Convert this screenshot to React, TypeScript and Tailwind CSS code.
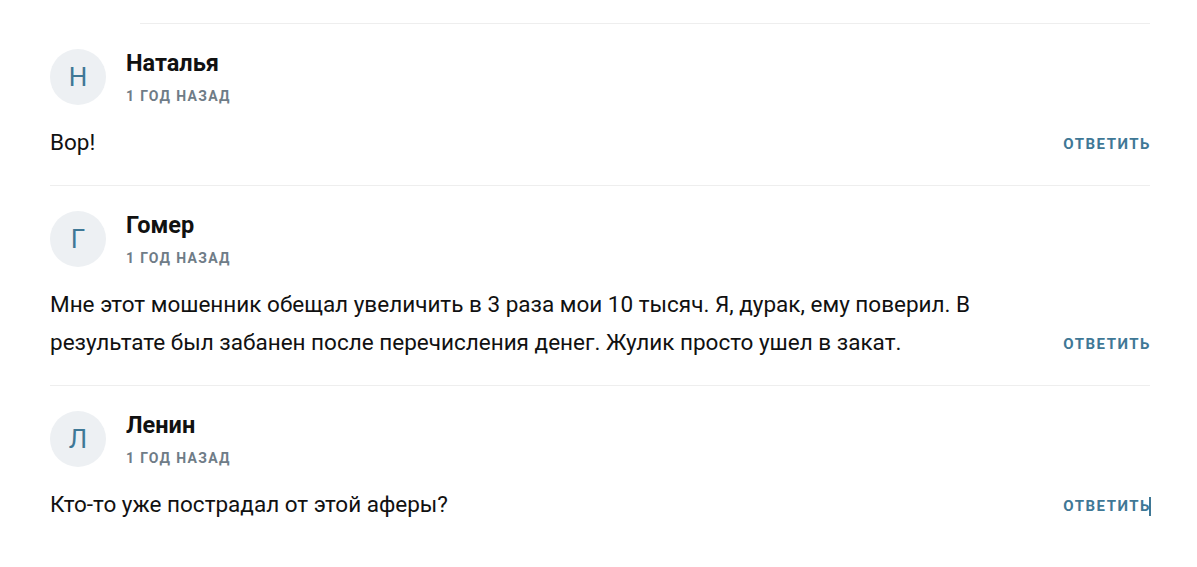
import React from "react";

type C = { letter: string; name: string; lines: string[] };

const comments: C[] = [
  { letter: "Н", name: "Наталья", lines: ["Вор!"] },
  {
    letter: "Г",
    name: "Гомер",
    lines: [
      "Мне этот мошенник обещал увеличить в 3 раза мои 10 тысяч. Я, дурак, ему поверил. В",
      "результате был забанен после перечисления денег. Жулик просто ушел в закат.",
    ],
  },
  { letter: "Л", name: "Ленин", lines: ["Кто-то уже пострадал от этой аферы?"] },
];

export default function App() {
  return (
    <div
      className="w-[1197px] h-[567px] bg-white overflow-hidden"
      style={{ fontFamily: "Roboto, 'Noto Sans', sans-serif" }}
    >
      <div className="ml-[50px] w-[1100px] pt-[23px]">
        <div className="ml-[90px] border-t border-[#eeeeee]" />
        {comments.map((c, i) => (
          <div
            key={i}
            className={`pt-[25px] pb-[24px] ${i < comments.length - 1 ? "border-b border-[#eeeeee]" : ""}`}
          >
            <div className="flex items-start h-[56px]">
              <div className="w-[56px] h-[56px] rounded-full bg-[#edf0f3] flex items-center justify-center text-[26px] text-[#3f7896]">
                {c.letter}
              </div>
              <div className="ml-[20px] flex flex-col">
                <div className="text-[23.5px] font-bold leading-[28px] text-[#111111]">{c.name}</div>
                <div className="text-[14px] font-bold leading-[18px] tracking-[0.095em] text-[#6f7c87] mt-[10px]">
                  1 ГОД НАЗАД
                </div>
              </div>
            </div>
            <div className="mt-[18px] flex items-end justify-between">
              <div className="text-[22.5px] leading-[38px] text-[#111111]">
                {c.lines.map((l, j) => (
                  <div key={j}>{l}</div>
                ))}
              </div>
              <div className="relative text-[15px] font-bold tracking-[0.1em] text-[#3f7896] leading-[38px] mb-[-2px] -mr-[1px]">
                ОТВЕТИТЬ
                {i === comments.length - 1 && (
                  <span className="absolute right-[0px] top-[10px] w-[2px] h-[19px] bg-[#3f7896]" />
                )}
              </div>
            </div>
          </div>
        ))}
      </div>
    </div>
  );
}
